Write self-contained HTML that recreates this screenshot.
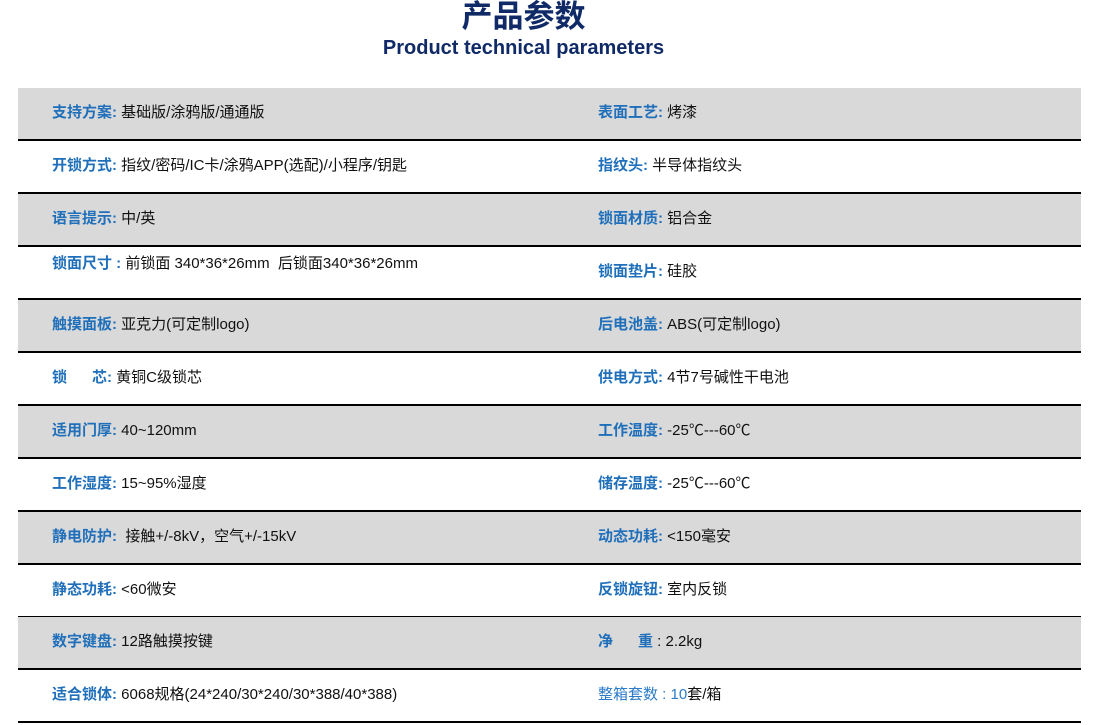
<!DOCTYPE html>
<html><head><meta charset="utf-8"><style>
body{margin:0;width:1097px;height:725px;background:#fff;position:relative;font-family:"Liberation Sans","Noto Sans CJK SC",sans-serif;overflow:hidden}
.t1{position:absolute;left:0;width:1047px;text-align:center;top:-10px;font-size:31px;font-weight:bold;color:#0f2a66;font-family:"Noto Sans CJK SC",sans-serif;line-height:48px}
.t2{position:absolute;left:0;width:1047px;text-align:center;top:36px;font-size:20px;font-weight:bold;color:#0f2a66;line-height:24px}
.row{position:absolute;left:18px;width:1063px;height:51px;border-bottom:2px solid #000}
.g{background:#d9d9d9}
.c{position:absolute;top:0;line-height:50px;font-size:15px;color:#111;white-space:pre}
.l{left:34px}.r{left:580px}
b{color:#1f6fba;font-weight:bold}
.lt{color:#2c7bc9}
</style></head><body>
<div class="t1">产品参数</div>
<div class="t2">Product technical parameters</div>
<div class="row g" style="top:88px"><div class="c l"><b>支持方案:</b> 基础版/涂鸦版/通通版</div><div class="c r"><b>表面工艺:</b> 烤漆</div></div>
<div class="row" style="top:141px"><div class="c l"><b>开锁方式:</b> 指纹/密码/IC卡/涂鸦APP(选配)/小程序/钥匙</div><div class="c r"><b>指纹头:</b> 半导体指纹头</div></div>
<div class="row g" style="top:194px"><div class="c l"><b>语言提示:</b> 中/英</div><div class="c r"><b>锁面材质:</b> 铝合金</div></div>
<div class="row" style="top:247px"><div class="c l" style="line-height:34px"><b>锁面尺寸 :</b> 前锁面 340*36*26mm  后锁面340*36*26mm</div><div class="c r"><b>锁面垫片:</b> 硅胶</div></div>
<div class="row g" style="top:300px"><div class="c l"><b>触摸面板:</b> 亚克力(可定制logo)</div><div class="c r"><b>后电池盖:</b> ABS(可定制logo)</div></div>
<div class="row" style="top:353px"><div class="c l"><b>锁      芯:</b> 黄铜C级锁芯</div><div class="c r"><b>供电方式:</b> 4节7号碱性干电池</div></div>
<div class="row g" style="top:406px"><div class="c l"><b>适用门厚:</b> 40~120mm</div><div class="c r"><b>工作温度:</b> -25℃---60℃</div></div>
<div class="row" style="top:459px"><div class="c l"><b>工作湿度:</b> 15~95%湿度</div><div class="c r"><b>储存温度:</b> -25℃---60℃</div></div>
<div class="row g" style="top:512px"><div class="c l"><b>静电防护:</b>  接触+/-8kV，空气+/-15kV</div><div class="c r"><b>动态功耗:</b> &lt;150毫安</div></div>
<div class="row" style="top:565px"><div class="c l"><b>静态功耗:</b> &lt;60微安</div><div class="c r"><b>反锁旋钮:</b> 室内反锁</div></div>
<div class="row g" style="top:617px"><div class="c l"><b>数字键盘:</b> 12路触摸按键</div><div class="c r"><b>净      重</b> : 2.2kg</div></div>
<div class="row" style="top:670px"><div class="c l"><b>适合锁体:</b> 6068规格(24*240/30*240/30*388/40*388)</div><div class="c r"><span class="lt">整箱套数 : 10</span>套/箱</div></div>
</body></html>
